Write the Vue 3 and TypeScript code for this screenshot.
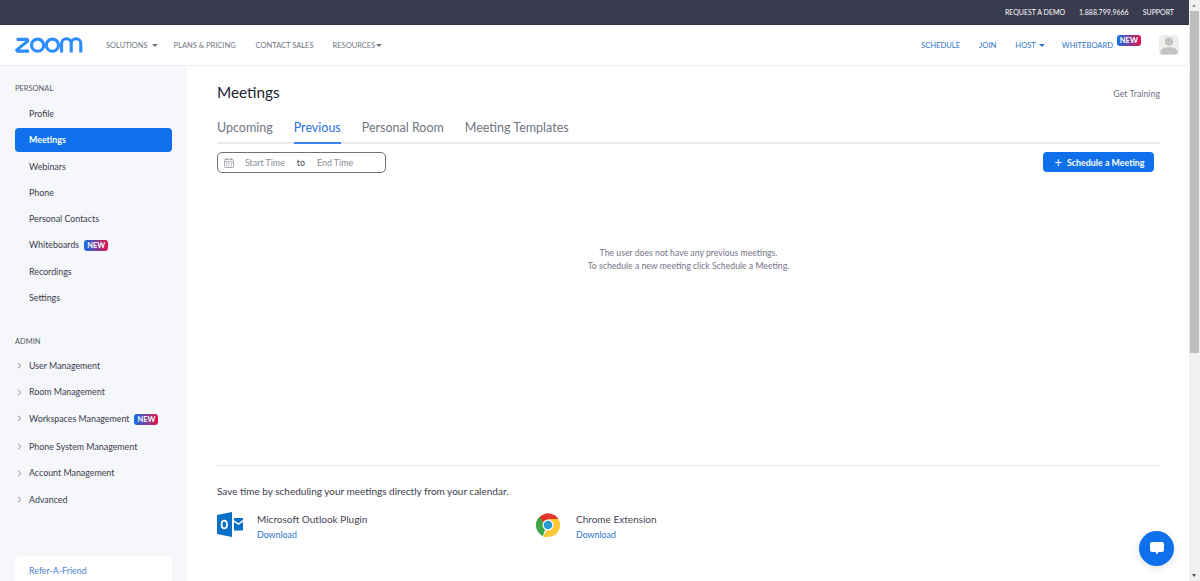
<template>
  <div class="page">
    <div class="topbar">
      <a>REQUEST A DEMO</a>
      <a>1.888.799.9666</a>
      <a>SUPPORT</a>
    </div>

    <header class="header">
      <svg class="logo" viewBox="0 0 70 16" width="70" height="16">
        <g fill="none" stroke="#2d8cff" stroke-width="3.1">
          <path d="M1.6 2.4H11.6a1.2 1.2 0 0 1 .8 2L2.4 12.4a.9.9 0 0 0 .6 1.7H14" stroke-linejoin="round" />
          <circle cx="22.6" cy="8.2" r="6.1" />
          <circle cx="37.4" cy="8.2" r="6.1" />
          <path d="M46.6 15.6V6.6a4.8 4.8 0 0 1 9.6 0V15.6M56.2 6.6a4.8 4.8 0 0 1 9.6 0V15.6" />
        </g>
      </svg>
      <nav class="nav-left">
        <a v-for="n in leftNav" :key="n.label" :style="{ marginRight: n.gap + 'px' }">{{ n.label }}<i v-if="n.caret" class="caret" :class="{ tight: n.tight }"></i></a>
      </nav>
      <nav class="nav-right">
        <a>SCHEDULE</a>
        <a>JOIN</a>
        <a>HOST<i class="caret blue"></i></a>
        <a class="wb">WHITEBOARD<span class="badge top-badge">NEW</span></a>
      </nav>
      <div class="avatar">
        <svg viewBox="0 0 20 20" width="20" height="20">
          <circle cx="10" cy="6.5" r="4.3" fill="#c4c4c4" />
          <path d="M1.5 19.5v-2.6C1.5 13.6 6 12.2 10 12.2s8.500 1.400 8.500 4.700v2.600z" fill="#c4c4c4" />
        </svg>
      </div>
    </header>

    <div class="body">
      <aside class="sidebar">
        <h4>PERSONAL</h4>
        <ul class="menu">
          <li v-for="m in personal" :key="m.label" :class="{ active: m.active }">
            <span>{{ m.label }}</span><span v-if="m.isNew" class="badge">NEW</span>
          </li>
        </ul>
        <h4 class="admin">ADMIN</h4>
        <ul class="menu admin-list">
          <li v-for="m in admin" :key="m.label" :class="{ grow: m.isNew }">
            <svg class="chev" viewBox="0 0 5 7" width="5" height="7">
              <path d="M1 .8 3.800 3.500 1 6.200" fill="none" stroke="#7a7a85" stroke-width=".9" />
            </svg>
            <span>{{ m.label }}</span><span v-if="m.isNew" class="badge">NEW</span>
          </li>
        </ul>
        <div class="refer">Refer-A-Friend</div>
      </aside>

      <main class="main">
        <div class="title-row">
          <h1>Meetings</h1>
          <a class="training">Get Training</a>
        </div>
        <div class="tabs">
          <a v-for="t in tabs" :key="t" :class="{ current: t === 'Previous' }">{{ t }}</a>
        </div>
        <div class="tool-row">
          <div class="range">
            <svg viewBox="0 0 10 10" width="10" height="10" class="cal">
              <g fill="none" stroke="#8a8a92" stroke-width=".7">
                <rect x=".5" y="1.300" width="9" height="8.200" rx="1" />
                <path d="M.5 3.800h9M2.800 0v2.200M7.200 0v2.200" />
              </g>
              <path d="M2 5.300h1.200v1H2zM4.400 5.300h1.200v1H4.400zM6.800 5.300H8v1H6.800zM2 7.200h1.200v1H2zM4.400 7.200h1.200v1H4.400zM6.800 7.200H8v1H6.800z" fill="#9a9aa2" />
            </svg>
            <span class="ph">Start Time</span>
            <span class="to">to</span>
            <span class="ph">End Time</span>
          </div>
          <button class="primary"><span class="plus">+</span>Schedule a Meeting</button>
        </div>

        <div class="empty">
          <p>The user does not have any previous meetings.</p>
          <p>To schedule a new meeting click Schedule a Meeting.</p>
        </div>

        <div class="plugins">
          <p class="save">Save time by scheduling your meetings directly from your calendar.</p>
          <div class="plugin-row">
            <div class="plugin outlook">
              <svg viewBox="0 0 26 25" width="26" height="25">
                <path d="M0 3 15 0v25L0 22z" fill="#0a6fc6" />
                <path d="M17 6h9v1.800l-4.500 3.400L17 8.200zM17 10l4.500 3L26 9.800V18.500H17z" fill="#0a6fc6" />
                <ellipse cx="7.300" cy="12.500" rx="2.700" ry="3.800" fill="none" stroke="#fff" stroke-width="1.800" />
              </svg>
              <div>
                <div class="p-name">Microsoft Outlook Plugin</div>
                <a class="p-link">Download</a>
              </div>
            </div>
            <div class="plugin chrome">
              <svg viewBox="0 0 24 24" width="24" height="24">
                <path d="M12 12 5.070 8 3.300 4.300A12 12 0 0 1 22.400 6H12z" fill="#e5352b" />
                <path d="M12 12 8.500 18l-1.500 5A12 12 0 0 1 3.300 3.700L8 10z" fill="#3fa648" />
                <path d="M12 6h10.400A12 12 0 0 1 12 24H7l3-6z" fill="#fcc934" />
                <circle cx="12" cy="12" r="5.500" fill="#fff" />
                <circle cx="12" cy="12" r="4.300" fill="#2b9ad8" />
              </svg>
              <div>
                <div class="p-name">Chrome Extension</div>
                <a class="p-link">Download</a>
              </div>
            </div>
          </div>
        </div>
      </main>
    </div>

    <div class="chat">
      <svg viewBox="0 0 14 13" width="14" height="13">
        <path d="M2 0h10a2 2 0 0 1 2 2v6a2 2 0 0 1-2 2H8.500L7 12.500 5.500 10H2a2 2 0 0 1-2-2V2a2 2 0 0 1 2-2z" fill="#fff" />
      </svg>
    </div>

    <div class="scrollbar">
      <i class="arrow up"></i>
      <div class="thumb"></div>
      <i class="arrow down"></i>
    </div>
  </div>
</template>

<script setup lang="ts">
type MenuItem = { label: string; active?: boolean; isNew?: boolean }

const leftNav = [
  { label: 'SOLUTIONS', caret: true, gap: 16 },
  { label: 'PLANS & PRICING', gap: 20 },
  { label: 'CONTACT SALES', gap: 19 },
  { label: 'RESOURCES', caret: true, tight: true, gap: 0 },
]

const personal: MenuItem[] = [
  { label: 'Profile' },
  { label: 'Meetings', active: true },
  { label: 'Webinars' },
  { label: 'Phone' },
  { label: 'Personal Contacts' },
  { label: 'Whiteboards', isNew: true },
  { label: 'Recordings' },
  { label: 'Settings' },
]

const admin: MenuItem[] = [
  { label: 'User Management' },
  { label: 'Room Management' },
  { label: 'Workspaces Management', isNew: true },
  { label: 'Phone System Management' },
  { label: 'Account Management' },
  { label: 'Advanced' },
]

const tabs = ['Upcoming', 'Previous', 'Personal Room', 'Meeting Templates']
</script>

<style>
html,
body {
  margin: 0;
  overflow: hidden;
  background: #fff;
}
</style>

<style scoped>
.page {
  position: relative;
  height: 581px;
  overflow: hidden;
  font-family: Lato, "Open Sans", sans-serif;
  color: #232333;
}

.topbar {
  height: 24px;
  padding-right: 26px;
  background: #393b4f;
  border-bottom: 1px solid #2f3042;
  display: flex;
  justify-content: flex-end;
  align-items: center;
  gap: 14px;
  font-size: 7px;
  color: #fff;
}

.header {
  height: 40px;
  border-bottom: 1px solid #edeef2;
  display: flex;
  align-items: center;
  padding: 0 21px 0 15px;
  background: #fff;
}

.logo {
  flex: none;
}

.nav-left {
  display: flex;
  margin-left: 21px;
  font-size: 7.500px;
  color: #6e7680;
}

.nav-right {
  margin-left: auto;
  display: flex;
  gap: 19px;
  font-size: 7.600px;
  color: #2d72c9;
}

.wb {
  position: relative;
  margin-left: -2px;
  margin-right: 46px;
}

.caret {
  display: inline-block;
  margin-left: 4px;
  vertical-align: 1px;
  border-left: 3px solid transparent;
  border-right: 3px solid transparent;
  border-top: 3px solid #6e7680;
}

.caret.tight {
  margin-left: 1px;
}

.caret.blue {
  margin-left: 3px;
  border-top-color: #2d72c9;
}

.avatar {
  width: 20px;
  height: 20px;
  border-radius: 4px;
  background: #eeeeea;
  overflow: hidden;
}

.avatar svg {
  display: block;
}

.badge {
  display: inline-block;
  margin-left: 5px;
  padding: 0 3px;
  height: 11px;
  line-height: 11px;
  border-radius: 3px;
  background: linear-gradient(90deg, #0e71eb, #e5134c);
  color: #fff;
  font-size: 7.500px;
  font-weight: 700;
}

.menu .badge {
  margin-top: 2px;
}

.top-badge {
  position: absolute;
  left: 55px;
  top: -5px;
  margin: 0;
}

.body {
  display: flex;
  height: 516px;
}

.sidebar {
  position: relative;
  width: 187px;
  flex: none;
  background: #f6f7fb;
  padding: 17px 15px 0;
  box-sizing: border-box;
}

.sidebar h4 {
  margin: 0 0 6.500px;
  font-size: 7.500px;
  line-height: 12px;
  font-weight: 400;
  color: #555a66;
}

.sidebar h4.admin {
  margin-top: 27px;
  margin-bottom: 5px;
}

.menu {
  list-style: none;
  margin: 0;
  padding: 0;
}

.menu li {
  position: relative;
  height: 24px;
  margin-bottom: 2.250px;
  padding-left: 14px;
  display: flex;
  align-items: center;
  font-size: 8.850px;
  border-radius: 4px;
  color: #3a3b4c;
}

.admin-list li {
  margin-bottom: 2.400px;
}

.admin-list li.grow {
  margin-bottom: 4.400px;
}

.menu li.active {
  background: #0e71eb;
  color: #fff;
  font-weight: 700;
}

.chev {
  position: absolute;
  left: 2px;
  top: 9px;
}

.refer {
  position: absolute;
  left: 15px;
  right: 15px;
  top: 490px;
  height: 60px;
  padding: 9px 14px;
  box-sizing: border-box;
  background: #fff;
  border-radius: 5px;
  font-size: 8.850px;
  color: #4a7fd0;
}

.main {
  flex: 1;
  min-width: 0;
  padding: 0 40px 0 30px;
}

.title-row {
  height: 52px;
  display: flex;
  justify-content: space-between;
  align-items: center;
}

.title-row h1 {
  margin: 0 0 1px;
  font-size: 15.300px;
  font-weight: 400;
  color: #232333;
}

.training {
  margin-top: 3px;
  font-size: 8.850px;
  color: #747487;
}

.tabs {
  height: 24px;
  border-bottom: 2px solid #e8e9ee;
  display: flex;
  gap: 21px;
  font-size: 12.500px;
  color: #6e7680;
}

.tabs a {
  height: 24px;
  line-height: 19px;
}

.tabs a.current {
  color: #2b6fdc;
  border-bottom: 2px solid #3a86ec;
}

.tool-row {
  display: flex;
  justify-content: space-between;
  align-items: flex-start;
  padding: 8px 6px 0 0;
}

.range {
  width: 169px;
  height: 21px;
  box-sizing: border-box;
  border: 1px solid #6e6e78;
  border-radius: 5px;
  display: flex;
  align-items: center;
  padding-left: 6px;
  font-size: 8.850px;
}

.cal {
  margin-right: 11px;
}

.ph {
  color: #8a8a96;
}

.to {
  margin: 0 12px;
  color: #444454;
}

.primary {
  width: 111px;
  height: 20px;
  padding: 0 0 0 2px;
  border: none;
  border-radius: 4px;
  background: #0e71eb;
  color: #fff;
  font-family: inherit;
  font-size: 8.850px;
  font-weight: 700;
}

.plus {
  font-size: 13px;
  font-weight: 400;
  margin-right: 5px;
  vertical-align: -1px;
}

.empty {
  margin-top: 73px;
  text-align: center;
  font-size: 8.700px;
  line-height: 13px;
  color: #747487;
}

.empty p {
  margin: 0;
}

.plugins {
  margin-top: 193px;
  border-top: 1px solid #e8e9ee;
  padding-top: 18px;
}

.save {
  margin: 0;
  font-size: 10px;
  line-height: 14px;
  color: #3a3b4c;
}

.plugin-row {
  display: flex;
  margin-top: 14px;
}

.plugin {
  display: flex;
  align-items: center;
}

.plugin svg {
  margin-top: -4px;
}

.outlook {
  width: 319px;
}

.outlook svg {
  margin-right: 14px;
}

.chrome svg {
  margin-right: 16px;
}

.p-name {
  font-size: 10px;
  line-height: 14px;
  color: #444454;
}

.p-link {
  display: block;
  margin-top: 3px;
  font-size: 8.850px;
  line-height: 12px;
  color: #2d72c9;
}

.chat {
  position: absolute;
  left: 1139px;
  top: 531px;
  width: 35px;
  height: 35px;
  border-radius: 50%;
  background: #0e71eb;
  box-shadow: 0 2px 8px rgba(0, 0, 0, 0.12);
  display: flex;
  align-items: center;
  justify-content: center;
}

.scrollbar {
  position: absolute;
  top: 0;
  right: 0;
  bottom: 0;
  width: 11px;
  background: #f0f0f0;
}

.thumb {
  position: absolute;
  left: 1px;
  right: 1px;
  top: 11px;
  height: 342px;
  background: #bdbdbd;
}

.arrow {
  position: absolute;
  left: 3px;
  border-left: 2.500px solid transparent;
  border-right: 2.500px solid transparent;
}

.arrow.up {
  top: 4px;
  border-bottom: 3px solid #9a9a9a;
}

.arrow.down {
  bottom: 4px;
  border-top: 3px solid #505050;
}
</style>
